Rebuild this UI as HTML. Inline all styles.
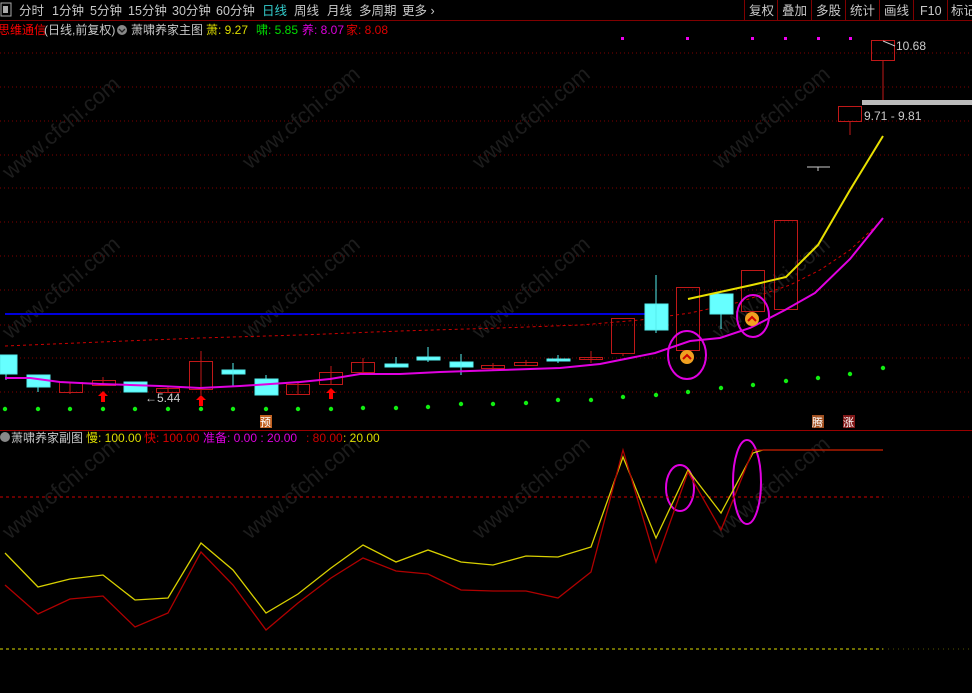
<!DOCTYPE html>
<html><head><meta charset="utf-8"><style>
html,body{margin:0;padding:0;background:#000;width:972px;height:693px;overflow:hidden}
svg{display:block}
text{font-family:"Liberation Sans","Noto Sans CJK SC",sans-serif}
</style></head><body>
<svg width="972" height="693" xmlns="http://www.w3.org/2000/svg">
<rect width="972" height="693" fill="#000"/>
<line x1="0" y1="20.5" x2="972" y2="20.5" stroke="#800000"/>
<rect x="1" y="3" width="10" height="13" fill="none" stroke="#aaa"/>
<rect x="3" y="6" width="5" height="7" fill="#aaa"/>
<g font-size="12.5" fill="#c8c8c8">
<text x="19" y="15">分时</text><text x="52" y="15">1分钟</text><text x="90" y="15">5分钟</text>
<text x="128" y="15">15分钟</text><text x="172" y="15">30分钟</text><text x="216" y="15">60分钟</text>
<text x="262" y="15" fill="#3cc">日线</text><text x="294" y="15">周线</text><text x="327" y="15">月线</text>
<text x="359" y="15">多周期</text><text x="402" y="15">更多 ›</text>
</g>
<g stroke="#800000"><line x1="744.5" y1="0" x2="744.5" y2="20"/><line x1="777.5" y1="0" x2="777.5" y2="20"/><line x1="811.5" y1="0" x2="811.5" y2="20"/><line x1="845.5" y1="0" x2="845.5" y2="20"/><line x1="879.5" y1="0" x2="879.5" y2="20"/><line x1="913.5" y1="0" x2="913.5" y2="20"/><line x1="947.5" y1="0" x2="947.5" y2="20"/></g>
<g font-size="12.5" fill="#c8c8c8">
<text x="749" y="15">复权</text><text x="782" y="15">叠加</text><text x="816" y="15">多股</text><text x="850" y="15">统计</text><text x="884" y="15">画线</text><text x="920" y="15">F10</text><text x="951" y="15">标记</text>
</g>
<g font-size="12">
<text x="-2" y="34" fill="#f00">思维通信</text>
<text x="44" y="34" fill="#c8c8c8">(日线,前复权)</text>
<circle cx="122" cy="30" r="5" fill="#888"/><path d="M119 29l3 3 3-3" stroke="#222" fill="none" stroke-width="1.3"/>
<text x="131" y="34" fill="#c8c8c8">萧啸养家主图</text>
<text x="206" y="34" fill="#dd0">萧: 9.27</text>
<text x="256" y="34" fill="#0d0">啸: 5.85</text>
<text x="302" y="34" fill="#d0d">养: 8.07</text>
<text x="346" y="34" fill="#d00">家: 8.08</text>
</g>
<g stroke="#800000" stroke-dasharray="1,3">
<line x1="0" y1="53" x2="972" y2="53"/><line x1="0" y1="87" x2="972" y2="87"/><line x1="0" y1="121" x2="972" y2="121"/><line x1="0" y1="155" x2="972" y2="155"/><line x1="0" y1="188" x2="972" y2="188"/><line x1="0" y1="222" x2="972" y2="222"/><line x1="0" y1="256" x2="972" y2="256"/><line x1="0" y1="290" x2="972" y2="290"/><line x1="0" y1="325" x2="972" y2="325"/><line x1="0" y1="358" x2="972" y2="358"/><line x1="0" y1="392" x2="972" y2="392"/>
</g>
<g font-size="22" fill="#1c1c1c" font-family="Liberation Sans">
<text transform="translate(10,180) rotate(-40)">www.cfchi.com</text>
<text transform="translate(250,170) rotate(-40)">www.cfchi.com</text>
<text transform="translate(480,170) rotate(-40)">www.cfchi.com</text>
<text transform="translate(720,170) rotate(-40)">www.cfchi.com</text>
<text transform="translate(10,340) rotate(-40)">www.cfchi.com</text>
<text transform="translate(250,340) rotate(-40)">www.cfchi.com</text>
<text transform="translate(480,340) rotate(-40)">www.cfchi.com</text>
<text transform="translate(720,340) rotate(-40)">www.cfchi.com</text>
<text transform="translate(10,540) rotate(-40)">www.cfchi.com</text>
<text transform="translate(250,540) rotate(-40)">www.cfchi.com</text>
<text transform="translate(480,540) rotate(-40)">www.cfchi.com</text>
<text transform="translate(720,540) rotate(-40)">www.cfchi.com</text>
</g>
<g fill="#e0e"><rect x="621" y="37" width="3" height="3"/><rect x="686" y="37" width="3" height="3"/><rect x="751" y="37" width="3" height="3"/><rect x="784" y="37" width="3" height="3"/><rect x="817" y="37" width="3" height="3"/><rect x="849" y="37" width="3" height="3"/></g>
<path d="M5 346 L100 342 L200 338 L300 335 L400 331 L500 328 L580 325 L640 320 L690 313 L740 302 L790 285 L820 270 L850 250 L880 222" stroke="#c00" fill="none" stroke-dasharray="3,3"/>
<line x1="5" y1="314" x2="662" y2="314" stroke="#00d" stroke-width="2"/>
<g stroke="#c01818" fill="none">
<line x1="70" y1="382" x2="70" y2="394"/><rect x="59.5" y="382.5" width="23" height="10"/>
<line x1="103" y1="377" x2="103" y2="386"/><rect x="92.5" y="380.5" width="23" height="5"/>
<line x1="168" y1="386" x2="168" y2="393"/><rect x="156.5" y="388.5" width="23" height="4"/>
<line x1="201" y1="351" x2="201" y2="395"/><rect x="189.5" y="361.5" width="23" height="28"/>
<line x1="298" y1="382" x2="298" y2="395"/><rect x="286.5" y="384.5" width="23" height="10"/>
<line x1="331" y1="366" x2="331" y2="385"/><rect x="319.5" y="372.5" width="23" height="12"/>
<line x1="363" y1="358" x2="363" y2="374"/><rect x="351.5" y="362.5" width="23" height="10"/>
<line x1="493" y1="363" x2="493" y2="371"/><rect x="481.5" y="365.5" width="23" height="3"/>
<line x1="526" y1="360" x2="526" y2="366"/><rect x="514.5" y="362.5" width="23" height="3"/>
<line x1="591" y1="351" x2="591" y2="363"/><rect x="579.5" y="357.5" width="23" height="2"/>
<line x1="623" y1="353" x2="623" y2="356"/><rect x="611.5" y="318.5" width="23" height="35"/>
<line x1="688" y1="351" x2="688" y2="356"/><rect x="676.5" y="287.5" width="23" height="63"/>
<rect x="741.5" y="270.5" width="23" height="41"/>
<rect x="774.5" y="220.5" width="23" height="89"/>
<line x1="850" y1="121" x2="850" y2="135"/><rect x="838.5" y="106.5" width="23" height="15"/>
<line x1="883" y1="60" x2="883" y2="100"/><rect x="871.5" y="40.5" width="23" height="20"/>
</g>
<g fill="#6ff" stroke="#5ee">
<rect x="0" y="355" width="17" height="19"/><line x1="6" y1="374" x2="6" y2="380"/>
<rect x="27" y="375" width="23" height="12"/><line x1="38" y1="387" x2="38" y2="392"/>
<rect x="124" y="382" width="23" height="10"/>
<rect x="222" y="370" width="23" height="4"/><line x1="233" y1="363" x2="233" y2="386"/>
<rect x="255" y="379" width="23" height="16"/><line x1="266" y1="375" x2="266" y2="379"/>
<rect x="385" y="364" width="23" height="3"/><line x1="396" y1="357" x2="396" y2="364"/>
<rect x="417" y="357" width="23" height="3"/><line x1="428" y1="347" x2="428" y2="362"/>
<rect x="450" y="362" width="23" height="5"/><line x1="461" y1="354" x2="461" y2="375"/>
<rect x="547" y="359" width="23" height="2"/><line x1="558" y1="355" x2="558" y2="363"/>
<rect x="645" y="304" width="23" height="26"/><line x1="656" y1="275" x2="656" y2="333"/>
<rect x="710" y="294" width="23" height="20"/><line x1="721" y1="314" x2="721" y2="329"/>
</g>
<line x1="807" y1="167" x2="830" y2="167" stroke="#ccc"/><line x1="818" y1="167" x2="818" y2="171" stroke="#ccc"/>
<rect x="862" y="100" width="110" height="5" fill="#bbb"/>
<text x="864" y="120" font-size="12" fill="#ccc">9.71 - 9.81</text>
<text x="896" y="50" font-size="12" fill="#ccc">10.68</text>
<line x1="883" y1="41" x2="895" y2="46" stroke="#ccc"/>
<text x="145" y="402" font-size="12" fill="#ccc">←5.44</text>
<path d="M5 378 L30 378 L60 382 L100 384 L130 385 L160 386 L200 388 L240 386 L300 382 L330 379 L360 374 L400 374 L440 372 L500 370 L560 368 L600 364 L655 353 L690 341 L720 338 L750 328 L785 310 L815 293 L850 259 L883 218" stroke="#e000e0" stroke-width="2" fill="none"/>
<path d="M688 299 L720 292 L752 285 L786 277 L818 245 L850 190 L883 136" stroke="#e8e000" stroke-width="2" fill="none"/>
<g fill="#f00"><path d="M103 391 l-5 5 h3 v6 h4 v-6 h3z"/><path d="M201 395 l-5 5 h3 v6 h4 v-6 h3z"/><path d="M331 388 l-5 5 h3 v6 h4 v-6 h3z"/></g>
<g fill="#1e1">
<circle cx="5" cy="409" r="2.2"/><circle cx="38" cy="409" r="2.2"/><circle cx="70" cy="409" r="2.2"/><circle cx="103" cy="409" r="2.2"/><circle cx="135" cy="409" r="2.2"/><circle cx="168" cy="409" r="2.2"/><circle cx="201" cy="409" r="2.2"/><circle cx="233" cy="409" r="2.2"/><circle cx="266" cy="409" r="2.2"/><circle cx="298" cy="409" r="2.2"/><circle cx="331" cy="409" r="2.2"/><circle cx="363" cy="408" r="2.2"/><circle cx="396" cy="408" r="2.2"/><circle cx="428" cy="407" r="2.2"/><circle cx="461" cy="404" r="2.2"/><circle cx="493" cy="404" r="2.2"/><circle cx="526" cy="403" r="2.2"/><circle cx="558" cy="400" r="2.2"/><circle cx="591" cy="400" r="2.2"/><circle cx="623" cy="397" r="2.2"/><circle cx="656" cy="395" r="2.2"/><circle cx="688" cy="392" r="2.2"/><circle cx="721" cy="388" r="2.2"/><circle cx="753" cy="385" r="2.2"/><circle cx="786" cy="381" r="2.2"/><circle cx="818" cy="378" r="2.2"/><circle cx="850" cy="374" r="2.2"/><circle cx="883" cy="368" r="2.2"/>
</g>
<g font-size="11"><rect x="260" y="415" width="12" height="13" fill="#c06020"/><text x="260" y="426" fill="#fff">预</text>
<rect x="812" y="415" width="12" height="13" fill="#a05020"/><text x="812" y="426" fill="#fff">腾</text>
<rect x="843" y="415" width="12" height="13" fill="#801818"/><text x="843" y="426" fill="#fff">涨</text></g>
<g><circle cx="687" cy="357" r="7" fill="#f0a020"/><path d="M683 359l4-4 4 4" stroke="#c00" stroke-width="2" fill="none"/>
<circle cx="752" cy="319" r="7" fill="#f0a020"/><path d="M748 321l4-4 4 4" stroke="#c00" stroke-width="2" fill="none"/></g>
<g stroke="#e000e0" stroke-width="2" fill="none"><ellipse cx="687" cy="355" rx="19" ry="24"/><ellipse cx="753" cy="316" rx="16" ry="21"/><ellipse cx="680" cy="488" rx="14" ry="23"/><ellipse cx="747" cy="482" rx="14" ry="42"/></g>
<line x1="0" y1="430.5" x2="972" y2="430.5" stroke="#900"/>
<g font-size="12">
<circle cx="5" cy="437" r="5" fill="#888"/>
<text x="11" y="442" fill="#c8c8c8">萧啸养家副图</text>
<text x="86" y="442" fill="#dd0">慢: 100.00</text>
<text x="144" y="442" fill="#d00">快: 100.00</text>
<text x="203" y="442" fill="#d0d">准备: 0.00 : 20.00</text>
<text x="306" y="442" fill="#c00">: 80.00</text>
<text x="343" y="442" fill="#dd0">: 20.00</text>
</g>
<line x1="0" y1="497" x2="883" y2="497" stroke="#c00" stroke-dasharray="3,3"/>
<line x1="883" y1="497" x2="972" y2="497" stroke="#600" stroke-dasharray="1,4"/>
<line x1="0" y1="649" x2="883" y2="649" stroke="#dd0" stroke-dasharray="3,3"/>
<line x1="883" y1="649" x2="972" y2="649" stroke="#550" stroke-dasharray="1,4"/>
<path d="M5 553 L38 587 L70 579 L103 575 L135 600 L168 598 L201 543 L233 570 L266 613 L298 594 L331 568 L363 545 L396 562 L428 550 L461 562 L493 565 L526 556 L558 557 L591 547 L623 457 L656 538 L688 470 L721 513 L753 453 L763 450 L883 450" stroke="#d8d000" stroke-width="1.3" fill="none"/>
<path d="M5 585 L38 614 L70 599 L103 596 L135 627 L168 613 L201 552 L233 585 L266 630 L298 603 L331 578 L363 558 L396 571 L428 574 L461 590 L493 591 L526 591 L558 598 L591 572 L623 450 L656 562 L688 472 L721 530 L753 450 L883 450" stroke="#b00000" stroke-width="1.3" fill="none"/>
</svg>
</body></html>
